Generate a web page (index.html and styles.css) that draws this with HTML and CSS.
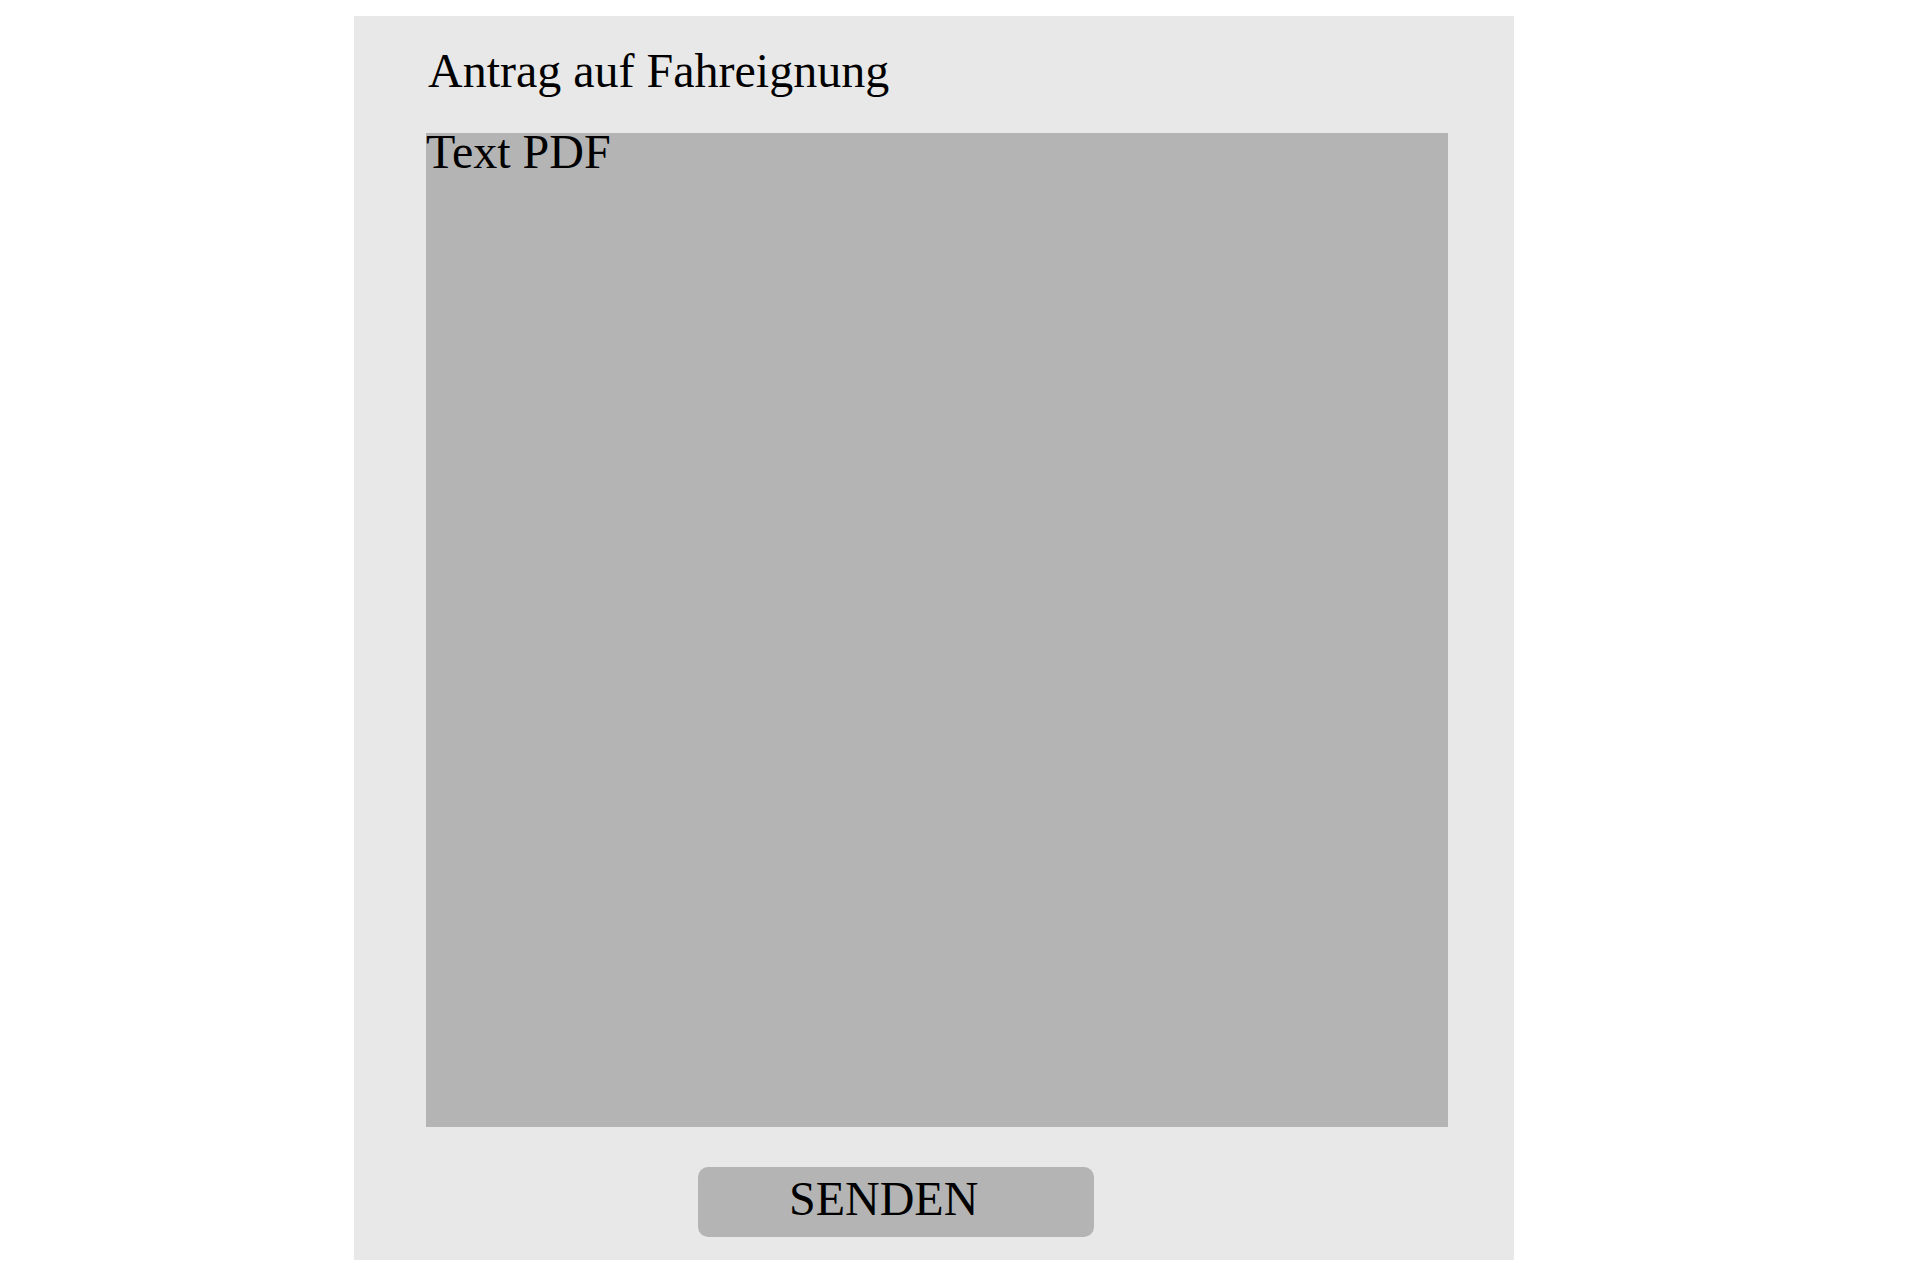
FILE: index.html
```html
<!DOCTYPE html>
<html lang="de">
<head>
<meta charset="utf-8">
<title>Antrag auf Fahreignung</title>
<link rel="stylesheet" href="styles.css">
</head>
<body>
<main class="panel">
  <h1 class="title">Antrag auf Fahreignung</h1>
  <section class="pdf-box">
    <div class="pdf-label">Text PDF</div>
  </section>
  <button class="send-btn" type="button">SENDEN</button>
</main>
</body>
</html>
```

FILE: styles.css
```css
html, body {
  margin: 0;
  padding: 0;
  background: #ffffff;
}

body {
  font-family: "Liberation Serif", "Times New Roman", serif;
  color: #000000;
}

.panel {
  box-sizing: border-box;
  width: 1160px;
  height: 1244px;
  margin: 16px 0 0 354px;
  padding: 27px 66px 0 72px;
  background: #e8e8e8;
  display: flex;
  flex-direction: column;
  align-items: flex-start;
}

.title {
  margin: 0 0 35px 2px;
  font-size: 48px;
  font-weight: normal;
  line-height: normal;
}

.pdf-box {
  width: 1022px;
  height: 994px;
  background: #b4b4b4;
}

.pdf-label {
  font-size: 48px;
  line-height: 37px;
}

.send-btn {
  box-sizing: border-box;
  margin: 40px 0 0 272px;
  width: 396px;
  height: 70px;
  padding: 5px 0 0 91px;
  border: none;
  border-radius: 10px;
  background: #b4b4b4;
  font-family: "Liberation Serif", "Times New Roman", serif;
  font-size: 48px;
  line-height: 53px;
  color: #000000;
  text-align: left;
  display: flex;
  align-items: flex-start;
}
```
